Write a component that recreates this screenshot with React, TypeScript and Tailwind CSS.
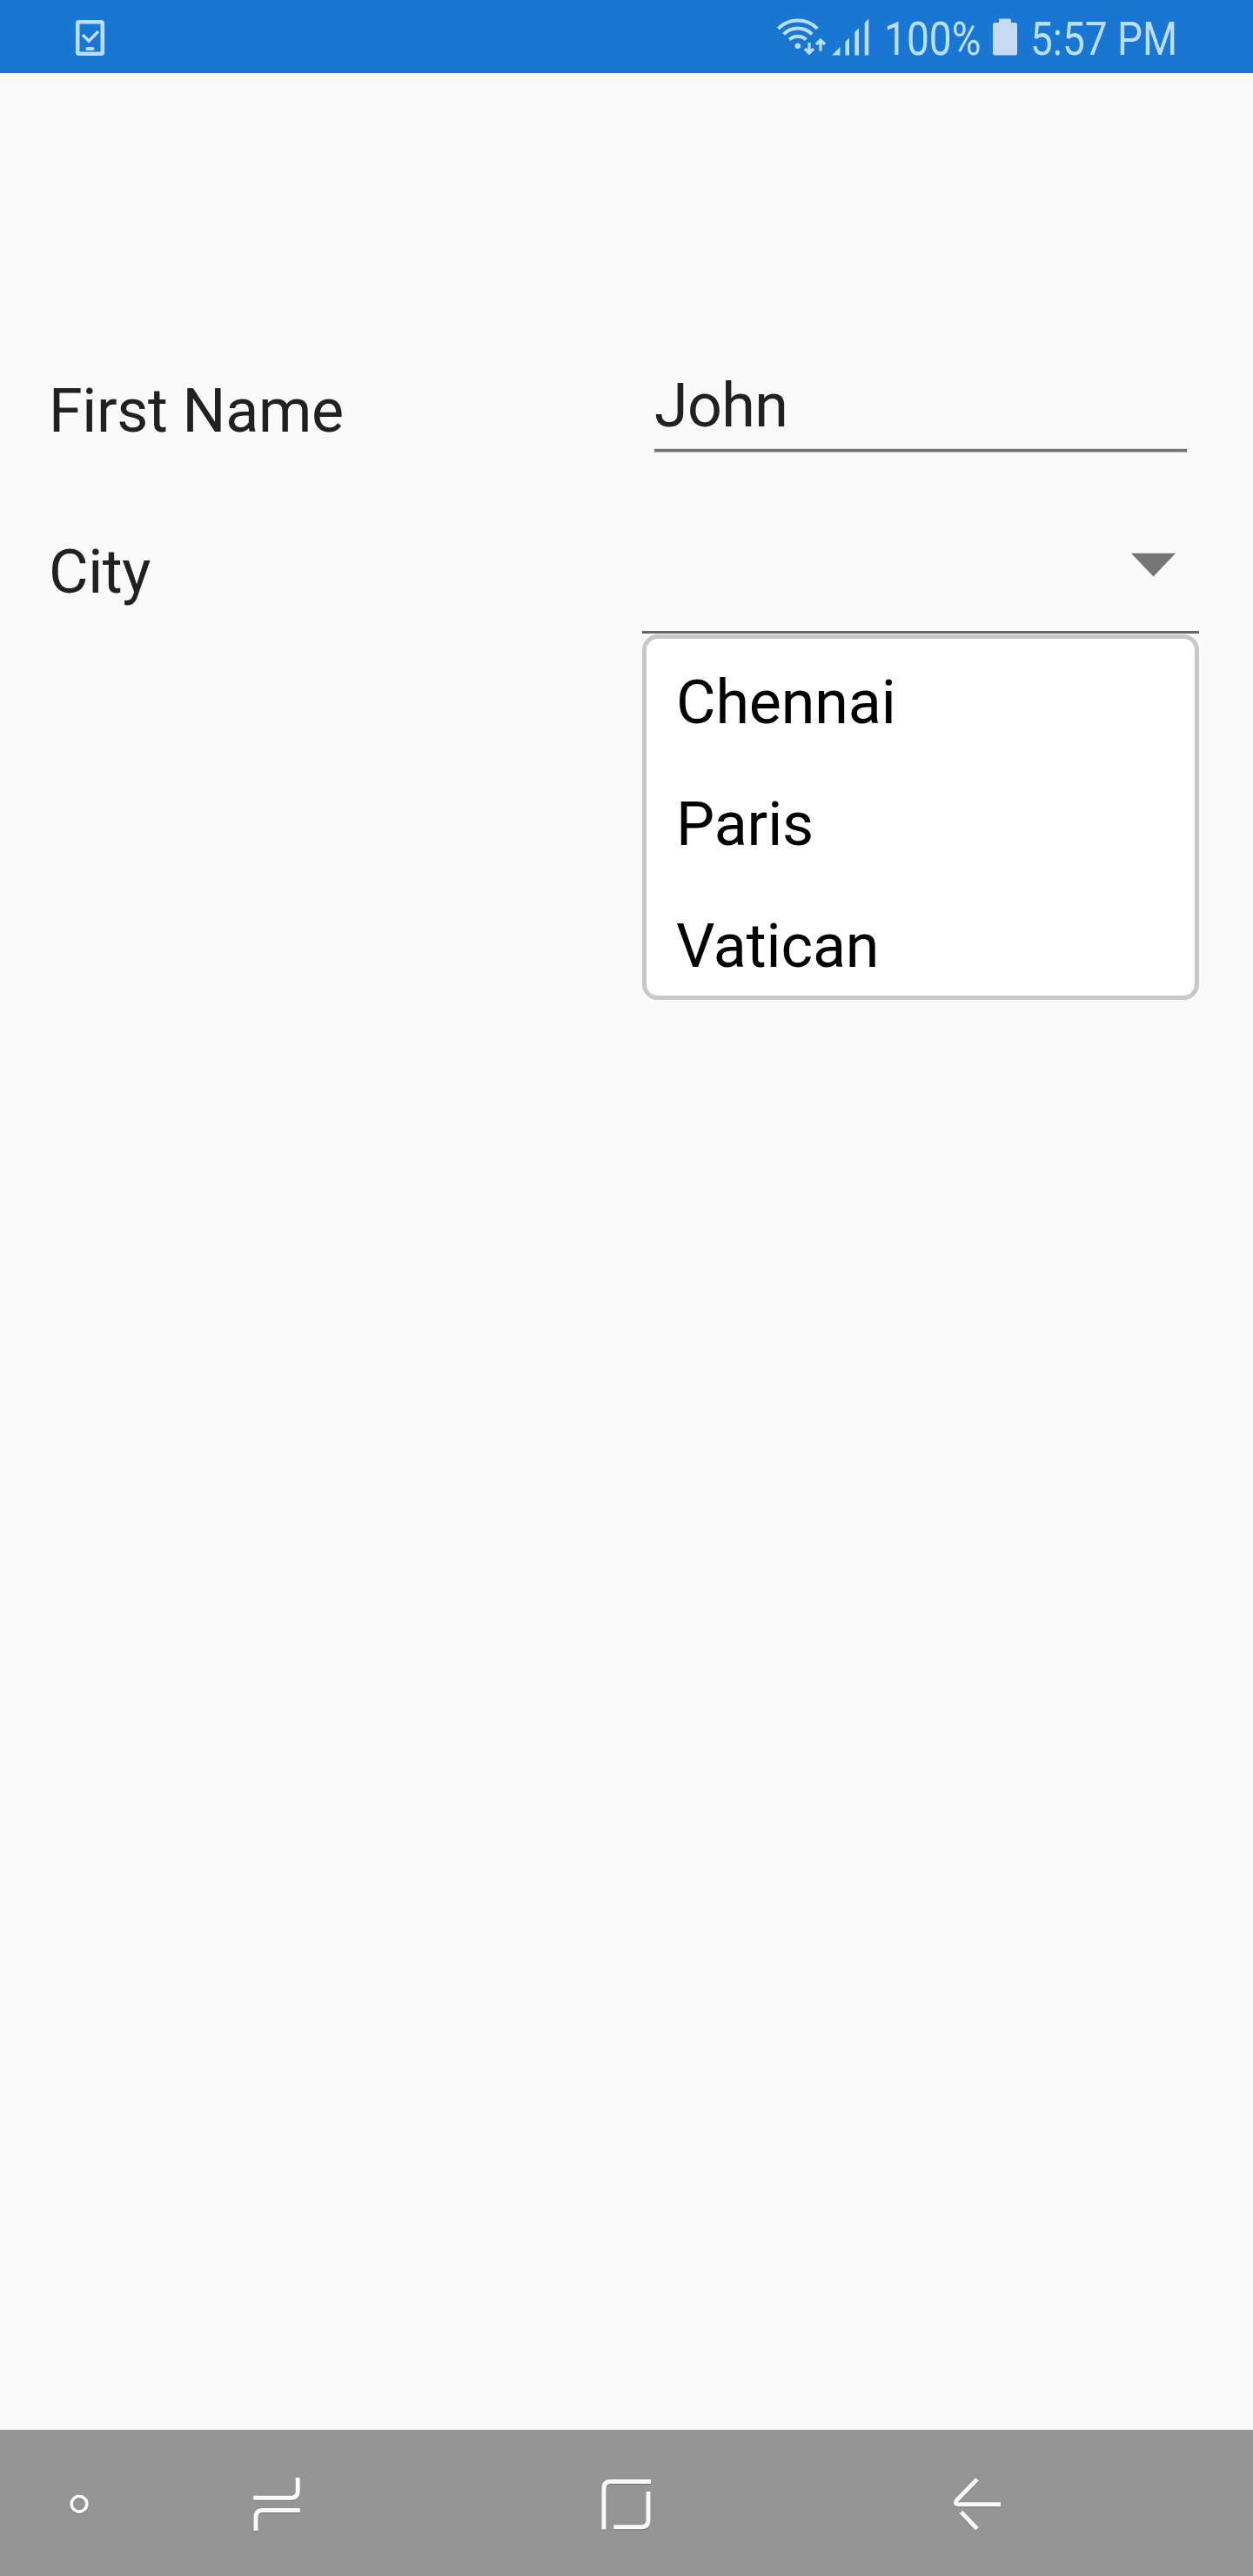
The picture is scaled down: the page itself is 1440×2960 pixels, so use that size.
const cities = ['Chennai', 'Paris', 'Vatican'];

function StatusBar() {
  return (
    <header className="flex h-[84px] items-start bg-[#1976d2] text-[#bbdefb]">
      <svg className="ml-[84px] mt-5 h-12 w-10 shrink-0" viewBox="84 20 40 48" fill="none" stroke="#bbdefb">
        <rect x="89.2" y="25.2" width="28.6" height="36.6" rx="1.5" strokeWidth="4.6" />
        <path d="M95 40l7.2 7L113 36" strokeWidth="3.6" />
        <path d="M100.500 56h6" strokeWidth="4" strokeLinecap="round" />
      </svg>
      <svg className="ml-[766px] mt-4 h-[52px] w-[110px] shrink-0" viewBox="890 16 110 52" fill="none" stroke="#bbdefb">
        <path d="M894.300 32.800a32 32 0 0 1 45 0" strokeWidth="4" />
        <path d="M900.600 39.300a23 23 0 0 1 32.500 0" strokeWidth="4" />
        <path d="M907.200 45.500a14 14 0 0 1 19.200 0" strokeWidth="4" />
        <circle cx="916.800" cy="52.800" r="3.300" fill="#bbdefb" stroke="none" />
        <path d="M930 49v12M925 56l5 5 5-5M943 58.500v-12M938 51l5-5 5 5" strokeWidth="3.300" />
        <path d="M956 63.500l9.500-9.500v9.500zM971.500 63.500V48l4.500-4.500v20zM982.300 63.500V37l4.700-4.700v31.200zM993.700 63.500V26.200l4.600-4.500v41.800z" fill="#bbdefb" stroke="none" />
      </svg>
      <span className="ml-4 w-[125px] origin-left scale-x-[0.862] whitespace-nowrap pt-[13px] text-[53.500px] leading-[63px]">100%</span>
      <svg className="mt-5 h-12 w-7 shrink-0" viewBox="1141 20 28 48" fill="#c5daf3">
        <path d="M1148.500 21.500h12l1.500 1.500v3h5.500l1.500 1.500v34.500l-1.500 1.500h-25l-1.500-1.500V27.500l1.500-1.500h5.500v-3z" />
      </svg>
      <span className="ml-[15px] origin-left scale-x-[0.859] whitespace-nowrap pt-[13px] text-[53.500px] leading-[63px]">5:57 PM</span>
    </header>
  );
}

function NavBar() {
  return (
    <nav className="flex h-[168px] items-center bg-[#959595] [&>svg]:shrink-0 [&>svg]:fill-none [&>svg]:stroke-[#fafafa] [&>svg]:[filter:drop-shadow(0_1.5px_0.7px_rgba(0,0,0,0.25))]">
      <svg className="ml-[70px] h-20 w-10" viewBox="70 2836 40 80">
        <circle cx="91" cy="2877.300" r="8.800" strokeWidth="3.700" />
      </svg>
      <svg className="ml-[170px] h-20 w-20" viewBox="280 2836 80 80" strokeWidth="5">
        <path d="M342.200 2847v15.500q0 7.800-7.800 7.800H291.200M344.800 2884.500H302q-8 0-8 8V2908" />
      </svg>
      <svg className="ml-80 h-20 w-20" viewBox="680 2836 80 80" strokeWidth="5">
        <path d="M748 2851.500H702q-8 0-8 8V2906.500M705.300 2903.700H737q8 0 8-8V2863" />
      </svg>
      <svg className="ml-[330px] h-20 w-20" viewBox="1090 2836 80 80" strokeWidth="5">
        <path d="M1123 2849l-23.500 24q-3 4.700 2 4.800H1150M1104.500 2886.500l18.500 19.500" />
      </svg>
    </nav>
  );
}

export default function App() {
  return (
    <div className="flex h-[2960px] w-[1440px] flex-col overflow-hidden bg-[#fafafa] font-['Roboto',sans-serif] text-[70px] leading-[82px] text-[#212121]">
      <StatusBar />
      <main className="grid flex-1 grid-cols-[682px_640px] content-start pl-14 pt-[338px]">
        <label className="pt-[9px] tracking-[-0.37px]">First Name</label>
        <div className="mx-3.5 h-[98px] pt-[3px] tracking-[-0.6px]">
          <div className="h-[90px]">John</div>
          <div className="h-[5px] border-b border-t border-b-[#b5b5b5] border-t-[#e2e2e2] bg-[#737373]" />
        </div>
        <label className="pt-24 tracking-[-0.37px]">City</label>
        <div>
          <div className="flex h-[208px] items-start justify-end border-b-[3px] border-[#666] pr-[26px] pt-[115px]">
            <svg className="h-7 w-[53px]" viewBox="0 0 53 28" fill="#757575">
              <path d="M1 .7h51L26.500 27.500z" />
            </svg>
          </div>
          <ul className="mt-px h-[420px] overflow-hidden rounded-[18px] border-[5px] border-[#c8c8c8] bg-white pl-[34px] pt-[3px] tracking-[-0.15px] text-black">
            {cities.map((city) => (
              <li key={city} className="h-[140px] leading-[140px]">{city}</li>
            ))}
          </ul>
        </div>
      </main>
      <NavBar />
    </div>
  );
}
